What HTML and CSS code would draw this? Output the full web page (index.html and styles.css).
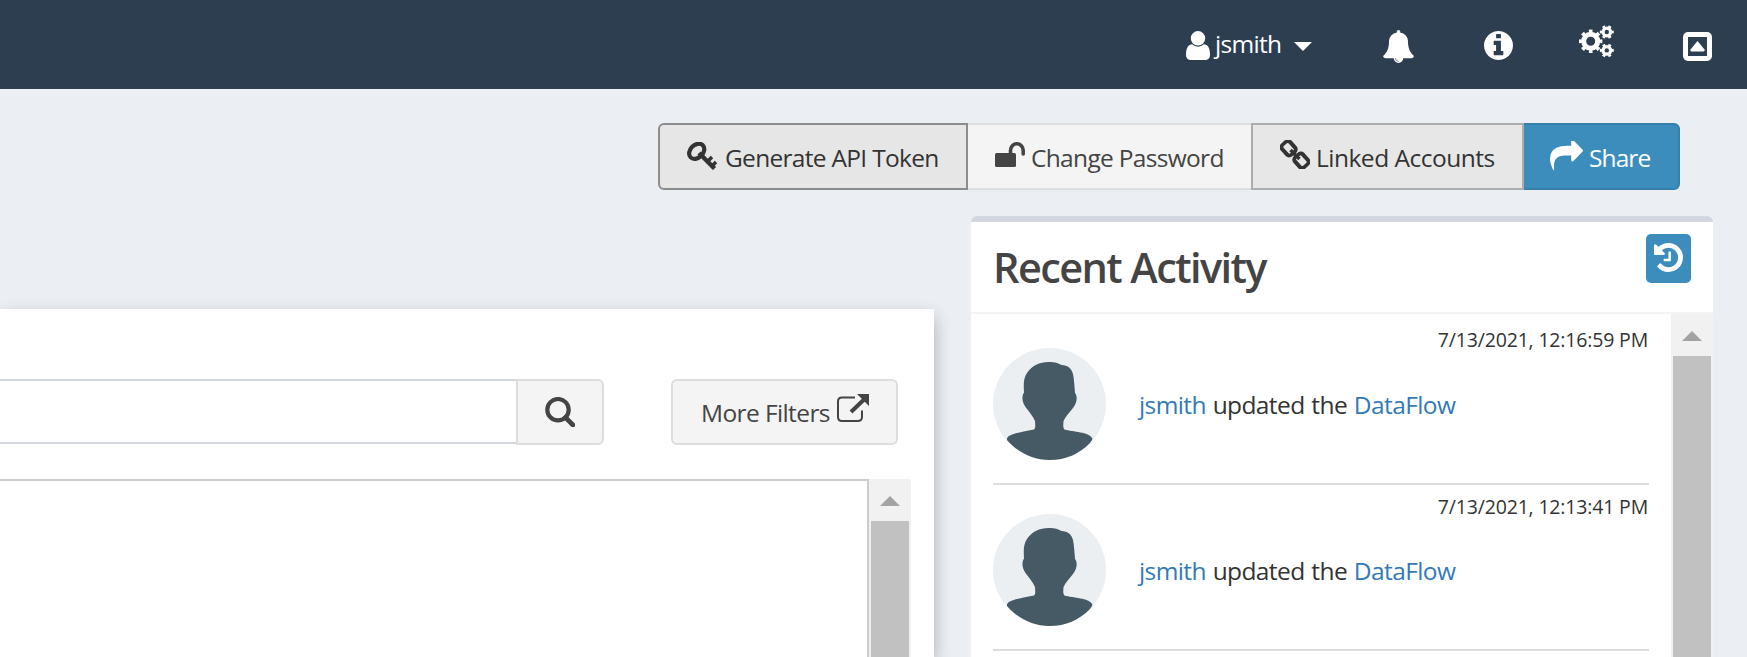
FILE: index.html
```html
<!DOCTYPE html>
<html lang="en">
<head>
<meta charset="utf-8">
<title>DataFlow</title>
<link rel="stylesheet" href="styles.css">
</head>
<body>
<svg width="0" height="0" class="defs">
  <symbol id="avatar" viewBox="0 0 113 112">
    <ellipse cx="56.5" cy="56" rx="56.5" ry="56" fill="#ebeff2"/>
    <path fill="#465a65" d="M14 90.500C16 86 24 85 41 81.500C43 80 42 76 42 73C40 68 36 64 32.500 59C29 54 28.500 48 31 44.500C30.500 36 30.500 30 34 25C39 17 48 13.500 57 14C62 14 65 15 68.500 17C75 17.500 78.500 20 80 26C81 31 81.500 38 82 45C84.500 48 84.500 54 80 60C76 65 73 68 70.500 73C70.500 76 69.500 79 71.500 81.500C80 84 96 84 99 90C100 91 98.500 93 97 95C86 106 73 112 56.500 112C40 112 24 104 14 92Z"/>
  </symbol>
</svg>
<header class="topbar">
  <a class="user">
    <svg class="i-user" viewBox="256 128 1280 1536"><path d="M1536 1399q0 109-62.500 187t-150.500 78h-854q-88 0-150.500-78t-62.500-187q0-85 8.500-160.500t31.500-152 58.500-131 94-89 134.500-34.500q131 128 313 128t313-128q76 0 134.500 34.500t94 89 58.500 131 31.500 152 8.500 160.500zm-256-887q0 159-112.500 271.500t-271.500 112.500-271.500-112.500-112.500-271.500 112.500-271.500 271.500-112.500 271.500 112.500 112.500 271.500z"/></svg>
    <span class="user-name">jsmith</span>
    <svg class="i-caret" viewBox="0 0 18 9"><path d="M0 0H18L9 9Z"/></svg>
  </a>
  <svg class="i-bell" viewBox="64 0 1664 1792"><path d="M912 1696q0-16-16-16-59 0-101.500-42.500t-42.500-101.500q0-16-16-16t-16 16q0 73 51.500 124.500t124.500 51.500q16 0 16-16zm816-288q0 52-38 90t-90 38h-448q0 106-75 181t-181 75-181-75-75-181h-448q-52 0-90-38t-38-90q50-42 91-88t85-119.500 74.500-158.500 50-206 19.500-260q0-152 117-282.500t307-158.500q-8-19-8-39 0-40 28-68t68-28 68 28 28 68q0 20-8 39 190 28 307 158.500t117 282.500q0 139 19.500 260t50 206 74.500 158.500 85 119.500 91 88z"/></svg>
  <svg class="i-info" viewBox="128 128 1536 1536"><path d="M1152 1376v-160q0-14-9-23t-23-9h-96v-512q0-14-9-23t-23-9h-320q-14 0-23 9t-9 23v160q0 14 9 23t23 9h96v320h-96q-14 0-23 9t-9 23v160q0 14 9 23t23 9h448q14 0 23-9t9-23zm-128-896v-160q0-14-9-23t-23-9h-192q-14 0-23 9t-9 23v160q0 14 9 23t23 9h192q14 0 23-9t9-23zm640 416q0 209-103 385.500t-279.500 279.500-385.500 103-385.500-103-279.500-279.500-103-385.500 103-385.500 279.500-279.500 385.500-103 385.500 103 279.500 279.500 103 385.500z"/></svg>
  <svg class="i-cogs" viewBox="0 0 35 33" fill="none" stroke="#fff">
    <g transform="translate(11.700 16.300)"><circle r="7" stroke-width="5"/><circle r="10" stroke-width="3.400" pathLength="80" stroke-dasharray="4.600 5.400" stroke-dashoffset="2.300"/></g>
    <g transform="translate(27.800 7)"><circle r="3.800" stroke-width="3.200"/><circle r="5.800" stroke-width="2.400" pathLength="60" stroke-dasharray="4.600 5.400" stroke-dashoffset="2.300"/></g>
    <g transform="translate(27.800 25.400)"><circle r="3.800" stroke-width="3.200"/><circle r="5.800" stroke-width="2.400" pathLength="60" stroke-dasharray="4.600 5.400" stroke-dashoffset="2.300"/></g>
  </svg>
  <svg class="i-square" viewBox="0 0 29 29"><rect x="2.500" y="2.500" width="24" height="24" rx="2.500" fill="none" stroke="#fff" stroke-width="5"/><path d="M14.500 9L21.500 17.500Q22 19.500 20.500 19.500H8.500Q7 19.500 7.500 17.500Z"/></svg>
</header>

<nav class="actions">
  <button class="btn btn-focus"><svg class="i-key" viewBox="0 0 30 28"><g fill="none" stroke="#333"><ellipse cx="9.700" cy="9.300" rx="8.600" ry="6.400" stroke-width="4.200" transform="rotate(-45 9.700 9.300)"/><path d="M12 11L27.500 26.500" stroke-width="4.400"/><path d="M21 19L25 15M25.500 23.500L29 20" stroke-width="3.500"/></g></svg><span class="t-gen">Generate API Token</span></button>
  <button class="btn"><svg class="i-lock" viewBox="0 0 30 25"><rect y="11" width="21" height="14" rx="1.500" fill="#444"/><path d="M15.500 11V8.500A6.300 6.700 0 0 1 28.200 8.500V12" fill="none" stroke="#444" stroke-width="3.600" stroke-linecap="round"/></svg><span class="t-change">Change Password</span></button>
  <button class="btn btn-active"><svg class="i-link" viewBox="0 0 30 29"><g fill="none" stroke="#333" stroke-width="3.800"><rect x="-7" y="-5" width="14" height="10" rx="3" transform="translate(8.600 8.300) rotate(48) scale(.95 1.060)"/><rect x="-7" y="-5" width="14" height="10" rx="3" transform="translate(21.400 20.700) rotate(48) scale(.95 1.060)"/><path d="M10.500 10L19.500 19" stroke-width="3.400"/></g></svg><span class="t-linked">Linked Accounts</span></button>
  <button class="btn btn-primary"><svg class="i-share" viewBox="0 128 1792 1536" preserveAspectRatio="none"><path d="M1792 640q0 26-19 45l-512 512q-19 19-45 19t-45-19-19-45v-256h-224q-98 0-175.500 6t-154 21.500-133 42.500-105.500 69.500-80 101-48.500 138.500-17.500 181q0 55 5 123 0 6 2.500 23.500t2.500 26.500q0 15-8.500 25t-23.500 10q-16 0-28-17-7-9-13-22t-13.500-30-10.500-24q-127-285-127-451 0-199 53-333 162-403 875-403h224v-256q0-26 19-45t45-19 45 19l512 512q19 19 19 45z"/></svg><span class="t-share">Share</span></button>
</nav>

<main class="content">
  <section class="results">
    <div class="filters">
      <div class="search-input"></div>
      <button class="search-btn"><svg class="i-search" viewBox="0 0 30 30" fill="none" stroke="#444"><circle cx="13" cy="12.700" r="10.700" stroke-width="4.200"/><path d="M20.500 20.500L28 28" stroke-width="4.600" stroke-linecap="round"/></svg></button>
      <button class="more"><span class="t-more">More Filters</span><svg class="i-ext" viewBox="0 0 32 28"><g fill="none" stroke="#444"><path d="M18 3.500H5Q1 3.500 1 7.500V23Q1 27 5 27H20.500Q25 27 25 23V16.500" stroke-width="2"/><path d="M14 18L27 5.500" stroke-width="4"/></g><path d="M20 0H32V12Z" fill="#444"/></svg></button>
    </div>
    <div class="table">
      <div class="table-body"></div>
      <div class="scroll"><svg viewBox="0 0 20 10"><path d="M10 0L20 10H0Z"/></svg><div class="thumb"></div></div>
    </div>
  </section>

  <aside class="activity">
    <div class="activity-head">
      <h3>Recent Activity</h3>
      <button class="history"><svg viewBox="128 128 1536 1536"><path d="M1664 896q0 156-61 298t-164 245-245 164-298 61q-172 0-327-72.500t-264-204.500q-7-10-6.500-22.500t8.500-20.500l137-138q10-9 25-9 16 2 23 12 73 95 179 147t225 52q104 0 198.500-40.500t163.500-109.500 109.500-163.500 40.500-198.500-40.500-198.500-109.500-163.500-163.500-109.500-198.500-40.500q-98 0-188 35.500t-160 101.500l137 138q31 30 14 69-17 40-59 40h-448q-26 0-45-19t-19-45v-448q0-42 40-59 39-17 69 14l130 129q107-101 244.500-156.500t284.500-55.500q156 0 298 61t245 164 164 245 61 298zm-640-288v448q0 14-9 23t-23 9h-320q-14 0-23-9t-9-23v-64q0-14 9-23t23-9h224v-352q0-14 9-23t23-9h64q14 0 23 9t9 23z"/></svg></button>
    </div>
    <div class="activity-body">
      <div class="feed">
        <article class="item">
          <time>7/13/2021, 12:16:59 PM</time>
          <div class="row"><svg class="avatar"><use href="#avatar"/></svg><p><a>jsmith</a> updated the <a>DataFlow</a></p></div>
        </article>
        <article class="item">
          <time>7/13/2021, 12:13:41 PM</time>
          <div class="row"><svg class="avatar"><use href="#avatar"/></svg><p><a>jsmith</a> updated the <a>DataFlow</a></p></div>
        </article>
      </div>
      <div class="scroll"><svg viewBox="0 0 20 10"><path d="M10 0L20 10H0Z"/></svg><div class="thumb"></div></div>
    </div>
  </aside>
</main>
</body>
</html>
```

FILE: styles.css
```css
* { box-sizing: border-box; }
html, body { height: 100%; overflow: hidden; }
body {
  margin: 0;
  display: flex;
  flex-direction: column;
  background: #ebeff4;
  color: #333;
  font: 24.5px/36px "Open Sans", "Noto Sans", sans-serif;
}
svg { display: block; flex: none; }
.defs { display: none; }
span, time, p, h3 { white-space: nowrap; }
button { font: inherit; color: inherit; margin: 0; padding: 0; }

.topbar {
  height: 89px;
  flex: none;
  display: flex;
  align-items: flex-start;
  justify-content: flex-end;
  padding-right: 35px;
  background: #2c3e50;
  color: #fff;
  fill: #fff;
}
.user { display: flex; align-items: flex-start; width: 126px; margin-right: 71px; }
.i-user { width: 24px; height: 29px; margin-top: 31px; }
.user-name { width: 66px; margin: 26px 13px 0 5px; letter-spacing: -.7px; }
.i-caret { width: 18px; height: 9px; margin-top: 42px; }
.i-bell { width: 31px; height: 33px; margin: 30px 70px 0 0; }
.i-info { width: 29px; height: 29px; margin: 31px 66px 0 0; }
.i-cogs { width: 35px; height: 33px; margin: 25px 69px 0 0; }
.i-square { width: 29px; height: 29px; margin-top: 32px; }

.actions { flex: none; display: flex; padding: 34px 0 0 658px; }
.btn {
  display: flex;
  align-items: flex-start;
  height: 67px;
  width: 283px;
  border: 2px solid #ddd;
  border-width: 2px 0;
  background: #f4f4f4;
  color: #444;
  padding-left: 27px;
}
.btn span { margin-top: 15px; }
.btn-focus { width: 310px; border: 2px solid #8c8c8c; border-radius: 6px 0 0 6px; background: #e6e6e6; color: #333; }
.btn-active { width: 273px; border: 2px solid #adadad; background: #e7e7e7; color: #333; }
.btn-primary { width: 156px; border: 2px solid #367fa9; border-left: 0; border-radius: 0 6px 6px 0; background: #3c8dbc; color: #fff; fill: #fff; padding-left: 26px; }
.i-key { width: 30px; height: 28px; margin: 17px 8px 0 0; }
.i-lock { width: 30px; height: 25px; margin: 17px 6px 0 0; }
.i-link { width: 30px; height: 29px; margin: 15px 6px 0 0; }
.i-share { width: 33px; height: 29px; margin: 16px 6px 0 0; }
.t-gen { letter-spacing: -.7px; }
.t-change { letter-spacing: -.68px; }
.t-linked { letter-spacing: -.5px; }
.t-share { letter-spacing: -.9px; }

.content { flex: 1; min-height: 0; display: flex; align-items: stretch; padding-top: 26px; }
.results {
  width: 934px;
  margin: 93px 37px 0 0;
  background: #fff;
  box-shadow: 0 8px 16px rgba(0, 0, 0, .2), 0 6px 20px rgba(0, 0, 0, .08);
  display: flex;
  flex-direction: column;
}
.filters { display: flex; padding-top: 70px; flex: none; }
.search-input { width: 516px; height: 65px; border: 2px solid #d2d6de; border-width: 2px 0; }
.search-btn { display: flex; align-items: flex-start; width: 88px; height: 66px; border: 2px solid #ddd; border-radius: 0 6px 6px 0; background: #f4f4f4; padding: 16px 0 0 27px; }
.i-search { width: 30px; height: 30px; }
.more { display: flex; align-items: flex-start; width: 227px; height: 66px; margin-left: 67px; border: 2px solid #ddd; border-radius: 6px; background: #f4f4f4; color: #444; padding-left: 28px; }
.t-more { width: 129px; margin: 14px 7px 0 0; text-align: left; letter-spacing: -.6px; }
.i-ext { width: 32px; height: 28px; margin-top: 13px; }
.table { flex: 1; display: flex; margin-top: 34px; }
.table-body { width: 869px; border: solid #ccc; border-width: 2px 2px 0 0; }

.scroll { width: 42px; flex: none; background: #f1f1f1; display: flex; flex-direction: column; align-items: center; border-top-right-radius: 2px; }
.scroll svg { width: 20px; height: 10px; margin: 17px 0 15px; fill: #a3a3a3; }
.thumb { flex: 1; width: 38px; background: #c1c1c1; }

.activity { width: 742px; border-top: 6px solid #d2d6de; border-radius: 6px 6px 0 0; background: #fff; display: flex; flex-direction: column; }
.activity-head { flex: none; display: flex; justify-content: space-between; height: 92px; padding: 12px 22px 0 22px; border-bottom: 2px solid #f4f4f4; }
h3 { margin: 5px 0 0; font-size: 41.5px; line-height: 56px; font-weight: 600; color: #444; letter-spacing: -1.6px; }
.history { display: flex; align-items: flex-start; width: 45px; height: 49px; border: 0; border-radius: 5px; background: #3c8dbc; padding: 9px 0 0 8px; fill: #fff; }
.history svg { width: 29px; height: 29px; }
.activity-body { flex: 1; min-height: 0; display: flex; }
.feed { flex: 1; padding: 5px 22px 0; overflow: hidden; }
.item { height: 166px; border-bottom: 2px solid #ddd; }
time { display: block; height: 29px; padding-right: 1px; text-align: right; font-size: 19.5px; line-height: 42px; letter-spacing: -.17px; }
.item + .item time { line-height: 44px; }
.row { display: flex; align-items: flex-start; }
.avatar { width: 113px; height: 112px; }
p { margin: 39px 0 0 33px; letter-spacing: -.6px; word-spacing: 1px; }
p a { color: #337ab7; }
```
